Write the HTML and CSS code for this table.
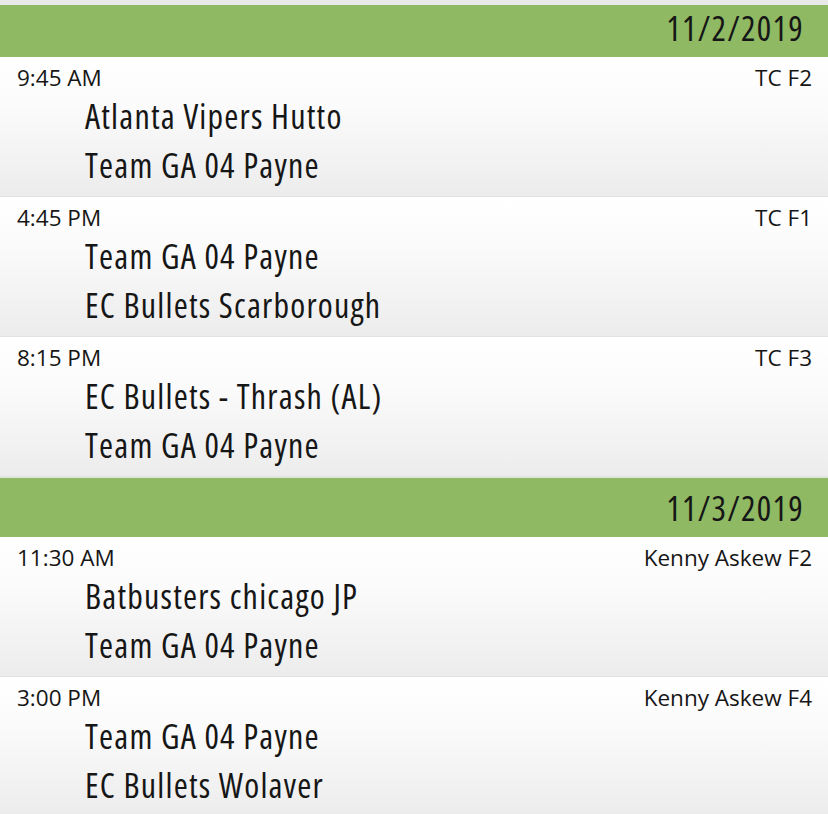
FILE: index.html
```html
<!DOCTYPE html>
<html>
<head>
<meta charset="utf-8">
<link rel="stylesheet" href="styles.css">
</head>
<body>
<div class="schedule">
  <div class="peek"></div>
  <div class="day-header day-header--clipped">11/2/2019</div>
  <div class="game">
    <div class="meta"><span class="time">9:45 AM</span><span class="venue">TC F2</span></div>
    <div class="teams"><div class="team">Atlanta Vipers Hutto</div><div class="team">Team GA 04 Payne</div></div>
  </div>
  <div class="game">
    <div class="meta"><span class="time">4:45 PM</span><span class="venue">TC F1</span></div>
    <div class="teams"><div class="team">Team GA 04 Payne</div><div class="team">EC Bullets Scarborough</div></div>
  </div>
  <div class="game">
    <div class="meta"><span class="time">8:15 PM</span><span class="venue">TC F3</span></div>
    <div class="teams"><div class="team">EC Bullets - Thrash (AL)</div><div class="team">Team GA 04 Payne</div></div>
  </div>
  <div class="day-header">11/3/2019</div>
  <div class="game">
    <div class="meta"><span class="time">11:30 AM</span><span class="venue">Kenny Askew F2</span></div>
    <div class="teams"><div class="team">Batbusters chicago JP</div><div class="team">Team GA 04 Payne</div></div>
  </div>
  <div class="game">
    <div class="meta"><span class="time">3:00 PM</span><span class="venue">Kenny Askew F4</span></div>
    <div class="teams"><div class="team">Team GA 04 Payne</div><div class="team">EC Bullets Wolaver</div></div>
  </div>
</div>
</body>
</html>
```
FILE: styles.css
```css
html, body {
  margin: 0;
  padding: 0;
  background: #ffffff;
}
body {
  font-family: "Open Sans", "DejaVu Sans", sans-serif;
  font-stretch: 75%;
  color: #161616;
  overflow: hidden;
}
.schedule {
  width: 828px;
}
.peek {
  height: 5px;
  background: #e9e9e9;
}
.day-header {
  height: 60px;
  box-sizing: border-box;
  background: #8fb963;
  display: flex;
  align-items: flex-end;
  justify-content: flex-end;
  padding: 0 24px 12px 0;
  font-size: 34px;
  line-height: 34px;
  letter-spacing: 1.3px;
  border-top: 1px solid #dfe8d4;
}
.day-header--clipped {
  height: 52px;
  border-top: none;
}
.game {
  height: 140px;
  box-sizing: border-box;
  padding: 7px 16px 0 17px;
  background: linear-gradient(to bottom, #ffffff 0%, #fbfbfb 35%, #ececec 100%);
  border-bottom: 1px solid #e2e2e2;
}
.meta {
  display: flex;
  justify-content: space-between;
  font-size: 22.5px;
  line-height: 28px;
  font-stretch: 95%;
}
.teams {
  padding-left: 68px;
}
.team {
  font-size: 34px;
  line-height: 49px;
  letter-spacing: 1.2px;
}
```
